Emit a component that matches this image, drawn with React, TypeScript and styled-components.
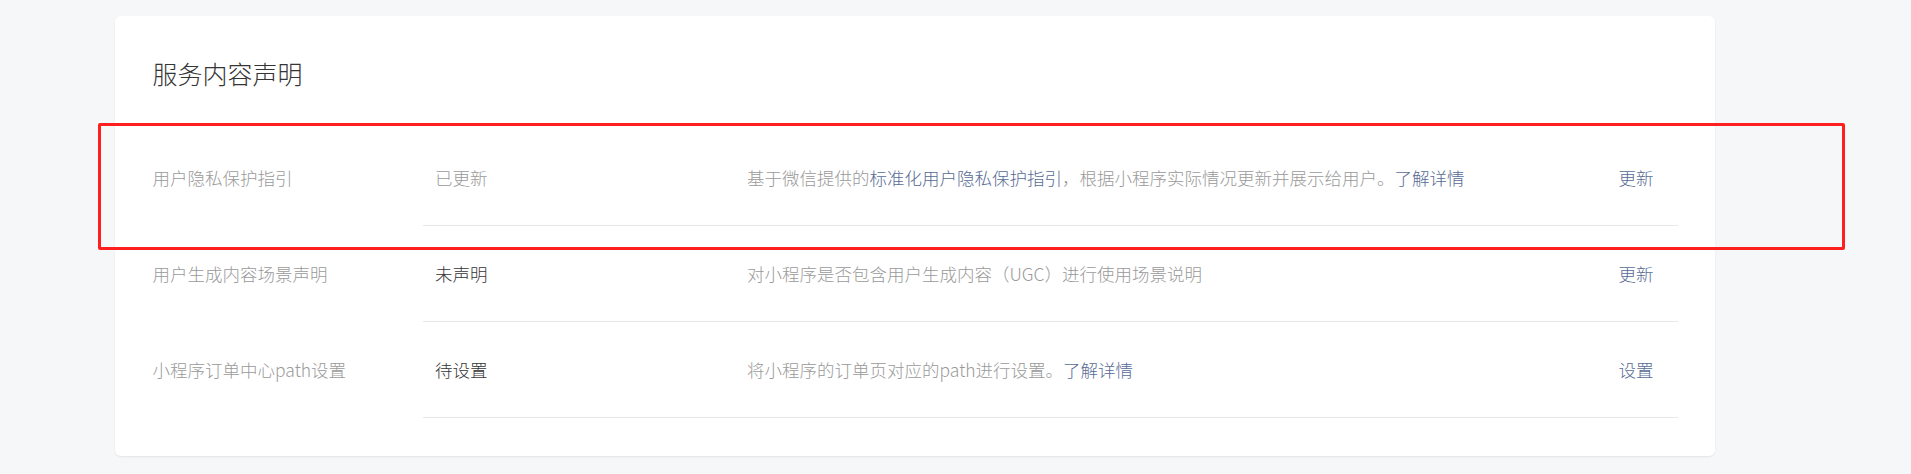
import { createGlobalStyle, styled } from "styled-components"

const GlobalStyle = createGlobalStyle`
  html, body {
    margin: 0;
    padding: 0;
    background: #f6f7f9;
  }
  body {
    font-family: "Noto Sans CJK SC", "Noto Sans", sans-serif;
    color: #353535;
  }
`

const Page = styled.div`
  position: relative;
  min-height: 474px;
  padding-top: 16px;
  box-sizing: border-box;
`

const Card = styled.section`
  width: 1600px;
  margin-left: 115px;
  padding: 0 37.5px 38px;
  box-sizing: border-box;
  background: #fff;
  border-radius: 6px;
  box-shadow: 0 1px 2px rgba(0, 0, 0, 0.08);
`

const CardHeader = styled.div`
  padding: 40px 0 39px;
`

const Title = styled.h3`
  margin: 0;
  font-size: 25px;
  line-height: 35px;
  font-weight: 300;
  color: #353535;
`

const Row = styled.div`
  display: flex;
  align-items: stretch;
  height: 96px;
  font-size: 17.5px;
  line-height: 24px;
  font-weight: 300;
`

const RowLabel = styled.div`
  width: 270px;
  flex: none;
  display: flex;
  align-items: center;
  color: #9a9a9a;
`

const RowBody = styled.div`
  flex: 1;
  display: flex;
  align-items: center;
  padding: 0 24px 0 12.5px;
  border-bottom: 1px solid #e7e7e7;
`

const Status = styled.div<{ $muted?: boolean }>`
  width: 312px;
  flex: none;
  color: ${props => props.$muted ? "#9a9a9a" : "#353535"};
`

const Desc = styled.div`
  flex: 1;
  color: #9a9a9a;
`

const Link = styled.a`
  color: #576b95;
  text-decoration: none;
  cursor: pointer;
`

const Action = styled(Link)`
  flex: none;
`

// red annotation frame drawn over the first row
const Highlight = styled.div`
  position: absolute;
  left: 98px;
  top: 123px;
  width: 1747px;
  height: 127px;
  box-sizing: border-box;
  border: 3px solid #ff1f1f;
  border-radius: 2px;
  pointer-events: none;
`

const rows = [
  {
    label: "用户隐私保护指引",
    status: "已更新",
    muted: true,
    desc: (
      <>
        基于微信提供的<Link>标准化用户隐私保护指引</Link>，根据小程序实际情况更新并展示给用户。<Link>了解详情</Link>
      </>
    ),
    action: "更新",
  },
  {
    label: "用户生成内容场景声明",
    status: "未声明",
    muted: false,
    desc: <>对小程序是否包含用户生成内容（UGC）进行使用场景说明</>,
    action: "更新",
  },
  {
    label: "小程序订单中心path设置",
    status: "待设置",
    muted: false,
    desc: (
      <>
        将小程序的订单页对应的path进行设置。<Link>了解详情</Link>
      </>
    ),
    action: "设置",
  },
]

export default function App() {
  return (
    <Page>
      <GlobalStyle />
      <Card>
        <CardHeader>
          <Title>服务内容声明</Title>
        </CardHeader>
        {rows.map(row => (
          <Row key={row.label}>
            <RowLabel>{row.label}</RowLabel>
            <RowBody>
              <Status $muted={row.muted}>{row.status}</Status>
              <Desc>{row.desc}</Desc>
              <Action>{row.action}</Action>
            </RowBody>
          </Row>
        ))}
      </Card>
      <Highlight />
    </Page>
  )
}
